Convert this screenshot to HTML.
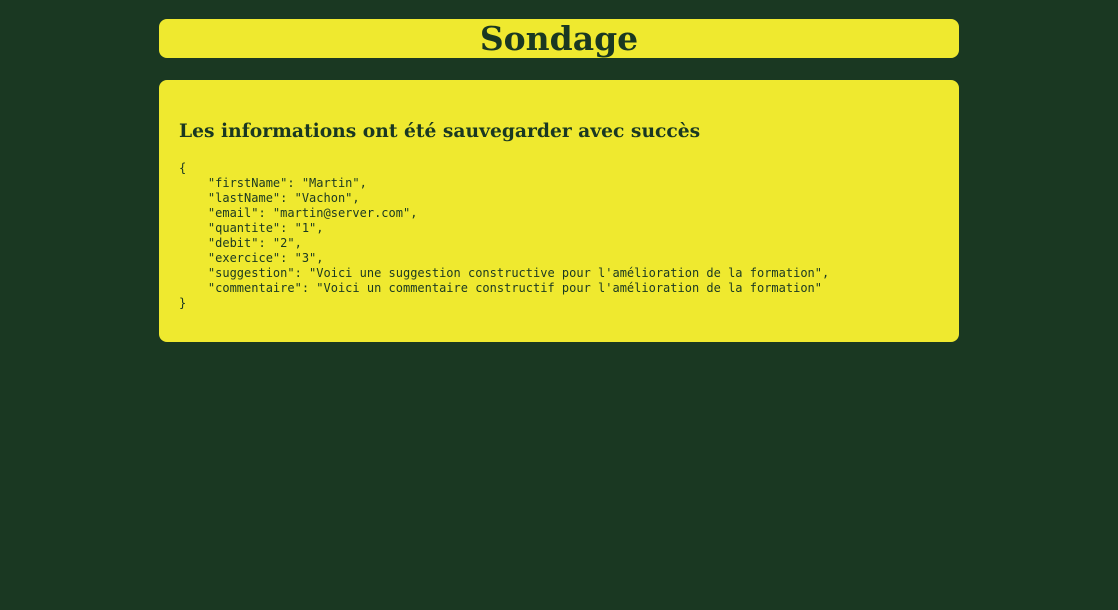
<!DOCTYPE html>
<html><head><meta charset="utf-8"><style>
body{margin:0;background:#1a3822;width:1118px;height:610px;overflow:hidden}
.t{position:absolute;left:159px;top:19px;width:800px;height:39px;background:#efe92f;border-radius:8px;text-align:center;font:bold 33px/40px "DejaVu Serif","Liberation Serif",serif;color:#1a3822}
.c{position:absolute;left:159px;top:80px;width:800px;height:262px;background:#efe92f;border-radius:8px;color:#1a3822}
h3{position:absolute;left:20px;top:39px;margin:0;font:bold 18.7px/24px "DejaVu Serif","Liberation Serif",serif}
pre{position:absolute;left:20px;top:81px;margin:0;font:12px/15px "DejaVu Sans Mono",monospace}
</style></head><body>
<div class="t">Sondage</div>
<div class="c"><h3>Les informations ont été sauvegarder avec succès</h3>
<pre>{
    "firstName": "Martin",
    "lastName": "Vachon",
    "email": "martin@server.com",
    "quantite": "1",
    "debit": "2",
    "exercice": "3",
    "suggestion": "Voici une suggestion constructive pour l'amélioration de la formation",
    "commentaire": "Voici un commentaire constructif pour l'amélioration de la formation"
}</pre></div>
</body></html>
